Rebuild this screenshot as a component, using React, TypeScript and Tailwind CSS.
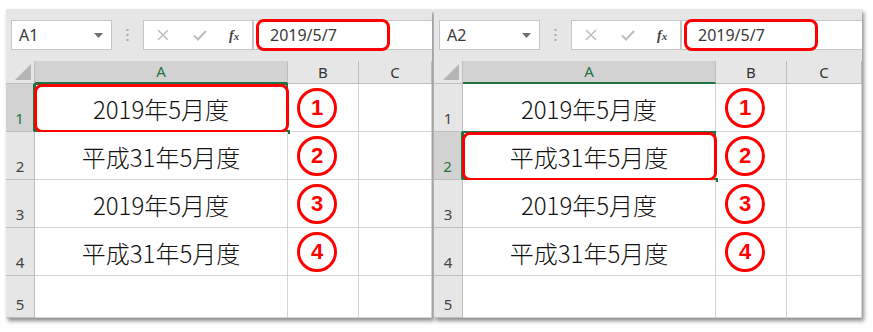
const rows = ['2019年5月度', '平成31年5月度', '2019年5月度', '平成31年5月度', '']
const marks = ['1', '2', '3', '4', '']

function Circled({ n }: { n: string }) {
  return (
    <div className="flex h-10 w-10 items-center justify-center rounded-full border-[3px] border-[#ff0000] text-[22px] font-bold leading-none text-[#ff0000] [font-family:'Liberation_Sans',sans-serif]">
      {n}
    </div>
  )
}

function Panel({ name, sel, width }: { name: string; sel: number; width: string }) {
  return (
    <div className={`relative flex h-[309px] flex-col bg-[#e6e6e6] shadow-[2px_3px_4px_rgba(0,0,0,0.45)] ${width}`}>
      {/* toolbar */}
      <div className="mt-[11px] flex h-[30px] items-stretch pl-[5px] [font-family:'Noto_Sans',sans-serif]">
        <div className="flex w-[101px] items-center justify-between border border-[#c6c6c6] bg-white pl-[7px] pr-[8px] text-[16px] text-[#3a3a3a]">
          <span>{name}</span>
          <svg width="9" height="5" viewBox="0 0 9 5">
            <path d="M0 0h9L4.5 5z" fill="#6e6e6e" />
          </svg>
        </div>
        <div className="flex w-[31px] items-center justify-center">
          <svg width="3" height="12" viewBox="0 0 3 12">
            <rect x="0.5" y="0" width="2" height="2" fill="#a8a8a8" />
            <rect x="0.5" y="5" width="2" height="2" fill="#a8a8a8" />
            <rect x="0.5" y="10" width="2" height="2" fill="#a8a8a8" />
          </svg>
        </div>
        <div className="flex w-[110px] items-center border border-[#c6c6c6] bg-white">
          <svg className="ml-[13px]" width="12" height="12" viewBox="0 0 12 12">
            <path d="M1 1l10 10M11 1L1 11" stroke="#bdbdbd" strokeWidth="1.5" />
          </svg>
          <svg className="ml-[24px]" width="14" height="11" viewBox="0 0 14 11">
            <path d="M1 5.5l4 4L13 1" stroke="#bdbdbd" strokeWidth="2" fill="none" />
          </svg>
          <span className="ml-[22px] text-[14px] font-bold italic text-[#444] [font-family:'Liberation_Serif',serif]">
            f<span className="text-[11px]">x</span>
          </span>
        </div>
        <div className="relative flex flex-1 items-center border-y border-l border-[#c6c6c6] bg-white pl-[16px] text-[16px] text-[#3a3a3a]">
          2019/5/7
          <div className="absolute left-[2px] top-[-2px] h-[32px] w-[134px] rounded-lg border-[3px] border-[#ff0000]" />
        </div>
      </div>

      {/* sheet grid */}
      <div className="mt-[11px] grid flex-1 grid-cols-[29px_253px_71px_1fr] grid-rows-[23px_48px_48px_48px_48px_1fr] overflow-hidden [font-family:'Noto_Sans',sans-serif]">
        <div className="relative border-b border-r border-[#bdbdbd] bg-[#e6e6e6]">
          <svg className="absolute bottom-[3px] right-[3px]" width="16" height="16" viewBox="0 0 16 16">
            <path d="M16 0v16H0z" fill="#b5b5b5" />
          </svg>
        </div>
        <div className="flex items-center justify-center border-b-2 border-r border-b-[#217346] border-r-[#bdbdbd] bg-[#d2d2d2] text-[15px] text-[#217346]">
          A
        </div>
        <div className="flex items-center justify-center border-b border-r border-[#bdbdbd] bg-[#e6e6e6] text-[15px] text-[#333]">
          B
        </div>
        <div className="flex items-center justify-center border-b border-r border-[#bdbdbd] bg-[#e6e6e6] text-[15px] text-[#333]">
          C
        </div>

        {rows.map((t, i) => {
          const isSel = i === sel
          return [
            <div
              key={`h${i}`}
              className={`flex items-end justify-center border-b border-r pb-[3px] text-[15px] leading-none ${
                isSel
                  ? 'border-b-[#bdbdbd] border-r-[#217346] border-r-2 bg-[#d2d2d2] text-[#217346]'
                  : 'border-[#bdbdbd] bg-[#e6e6e6] text-[#444]'
              }`}
            >
              <span className="pb-[2px]">{i + 1}</span>
            </div>,
            <div
              key={`a${i}`}
              className="relative flex items-center justify-center border-b border-r border-[#d4d4d4] bg-white pt-[3px] text-[24px] font-light text-[#111] [font-family:'Noto_Sans_CJK_JP',sans-serif]"
            >
              {t}
              {isSel && (
                <>
                  <div className="absolute inset-[-1px] border-2 border-[#217346]" />
                  <div className="absolute bottom-[-4px] right-[-4px] h-[6px] w-[6px] border border-white bg-[#217346]" />
                  <div className="absolute bottom-[-2px] left-[-1px] right-[-2px] top-0 rounded-lg border-[3px] border-[#ff0000]" />
                </>
              )}
            </div>,
            <div key={`b${i}`} className="flex items-center justify-center border-b border-r border-[#d4d4d4] bg-white pr-[12px]">
              {marks[i] && <Circled n={marks[i]} />}
            </div>,
            <div key={`c${i}`} className="border-b border-r border-[#d4d4d4] bg-white" />,
          ]
        })}
      </div>
    </div>
  )
}

export default function App() {
  return (
    <div className="h-[332px] w-[873px] bg-white">
      <div className="flex gap-[2px] pl-[6px] pt-[9px]">
        <Panel name="A1" sel={0} width="w-[426px]" />
        <Panel name="A2" sel={1} width="w-[428px]" />
      </div>
    </div>
  )
}
